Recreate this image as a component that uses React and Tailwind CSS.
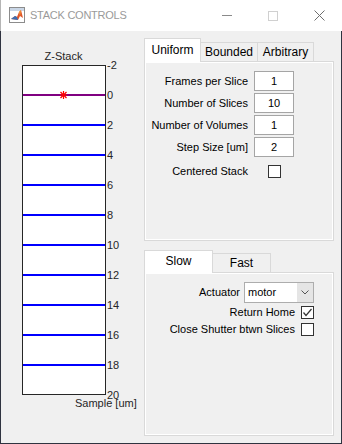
import React from "react";

function MatlabIcon() {
  return (
    <svg width="16" height="16" viewBox="0 0 16 16">
      <rect x="0.5" y="0.5" width="15" height="15" fill="#ffffff" stroke="#8c8c8c" />
      <rect x="1" y="1" width="14" height="3" fill="#c9d6e6" />
      <path d="M2 12 L6 9 L8 10 L10 5 L12 3 L14 11 L11 9 L9 13 Z" fill="#e0572a" />
      <path d="M2 12 L6 9 L8 10 L9 13 Z" fill="#3c6fb4" />
      <path d="M10 5 L12 3 L11 9 Z" fill="#f29a3a" />
    </svg>
  );
}

function CheckBox({ checked }) {
  return (
    <div className="w-[13px] h-[13px] border border-[#333333] bg-white flex items-center justify-center">
      {checked && (
        <svg width="11" height="11" viewBox="0 0 11 11">
          <polyline points="1.5,5.5 4,8.5 9.5,2" fill="none" stroke="#333333" strokeWidth="1.2" />
        </svg>
      )}
    </div>
  );
}

function EditBox({ value }) {
  return (
    <div className="w-[40px] h-[20px] border border-[#a5a5a5] bg-white flex items-center justify-center text-[11px] text-black">
      {value}
    </div>
  );
}

function ZStackPlot() {
  const ticks = [-2, 0, 2, 4, 6, 8, 10, 12, 14, 16, 18, 20];
  const yOf = (v) => 65 + (v + 2) * 15;
  return (
    <svg width="143" height="412" viewBox="0 0 143 412">
      <g transform="translate(-1,-31)" fontFamily="Liberation Sans, Arial, sans-serif" fontSize="11" fill="#262626">
        <rect x="22.5" y="65.5" width="83" height="329" fill="#ffffff" stroke="#262626" strokeWidth="1" />
        {[2, 4, 6, 8, 10, 12, 14, 16, 18].map((v) => (
          <line key={v} x1="23" x2="105" y1={yOf(v)} y2={yOf(v)} stroke="#0000ff" strokeWidth="2" />
        ))}
        <line x1="23" x2="105" y1={95} y2={95} stroke="#800080" strokeWidth="2" />
        <g stroke="#ff0000" strokeWidth="1.2">
          <line x1="63.5" y1="91" x2="63.5" y2="99" />
          <line x1="60" y1="95" x2="67" y2="95" />
          <line x1="60.5" y1="92" x2="66.5" y2="98" />
          <line x1="66.5" y1="92" x2="60.5" y2="98" />
        </g>
        <text x="63.5" y="60" textAnchor="middle">Z-Stack</text>
        {ticks.map((v) => (
          <text key={v} x="107" y={yOf(v) + 4}>{v}</text>
        ))}
        <text x="75" y="407">Sample [um]</text>
      </g>
    </svg>
  );
}

export default function App() {
  return (
    <div className="w-[342px] h-[444px] flex flex-col font-['Liberation_Sans',Arial,sans-serif] text-black overflow-hidden">
      {/* Title bar */}
      <div className="h-[31px] bg-white flex items-center border-l border-[#b5b5b5]">
        <div className="ml-[8px] mt-[-1px]">
          <MatlabIcon />
        </div>
        <div className="ml-[5px] text-[11px] tracking-[-0.25px] text-[#9a9a9a]">STACK CONTROLS</div>
        <div className="flex-1" />
        <div className="w-[46px] h-[31px] flex items-center justify-center">
          <div className="w-[10px] h-px bg-[#8a8a8a]" />
        </div>
        <div className="w-[46px] h-[31px] flex items-center justify-center">
          <div className="w-[10px] h-[10px] border border-[#d0d0d0]" />
        </div>
        <div className="w-[46px] h-[31px] flex items-center justify-center">
          <svg width="11" height="11" viewBox="0 0 11 11">
            <path d="M0.5 0.5 L10.5 10.5 M10.5 0.5 L0.5 10.5" stroke="#6e6e6e" strokeWidth="1" />
          </svg>
        </div>
      </div>

      {/* Body */}
      <div className="flex-1 flex bg-[#f0f0f0] border-l border-r border-b border-[#2f3340]">
        <div className="w-[143px] shrink-0">
          <ZStackPlot />
        </div>

        <div className="w-[190px] shrink-0 pt-[7px] flex flex-col">
          {/* Tab group 1 */}
          <div className="flex items-end h-[23px]">
            <div className="relative z-10 w-[57px] h-[24px] -mb-px bg-white border-l border-t border-r border-[#d9d9d9] flex items-center justify-center text-[12px] pb-[2px]">
              Uniform
            </div>
            <div className="w-[58px] h-[19px] -ml-px bg-[#f0f0f0] border-l border-t border-r border-[#d9d9d9] flex items-center justify-center text-[12px]">
              Bounded
            </div>
            <div className="w-[57px] h-[19px] -ml-px bg-[#f0f0f0] border-l border-t border-r border-[#d9d9d9] flex items-center justify-center text-[12px]">
              Arbitrary
            </div>
          </div>
          <div className="h-[180px] border border-[#d9d9d9] bg-[#f0f0f0]">
            <div className="h-full border border-white pt-[8px] pr-[38px] grid grid-cols-[1fr_40px] gap-x-[6px] gap-y-[2px] content-start text-[11px]">
              <div className="h-[20px] flex items-center justify-end">Frames per Slice</div>
              <EditBox value="1" />
              <div className="h-[20px] flex items-center justify-end">Number of Slices</div>
              <EditBox value="10" />
              <div className="h-[20px] flex items-center justify-end">Number of Volumes</div>
              <EditBox value="1" />
              <div className="h-[20px] flex items-center justify-end">Step Size [um]</div>
              <EditBox value="2" />
              <div className="h-[20px] flex items-center justify-end mt-[2px]">Centered Stack</div>
              <div className="h-[20px] flex items-center justify-center mt-[2px]">
                <CheckBox checked={false} />
              </div>
            </div>
          </div>

          {/* Tab group 2 */}
          <div className="flex items-end h-[22px] mt-[9px]">
            <div className="relative z-10 w-[69px] h-[23px] -mb-px bg-white border-l border-t border-r border-[#d9d9d9] flex items-center justify-center text-[12px] pb-[2px]">
              Slow
            </div>
            <div className="w-[59px] h-[19px] -ml-px bg-[#f0f0f0] border-l border-t border-r border-[#d9d9d9] flex items-center justify-center text-[12px]">
              Fast
            </div>
          </div>
          <div className="h-[164px] border border-[#d9d9d9] bg-[#f0f0f0]">
            <div className="h-full border border-white pt-[8px] pr-[18px] flex flex-col items-end text-[11px]">
              <div className="flex items-center gap-[4px]">
                <span>Actuator</span>
                <div className="w-[70px] h-[21px] border border-[#adadad] bg-white flex items-stretch">
                  <div className="flex-1 flex items-center pl-[3px]">motor</div>
                  <div className="w-[16px] bg-[#e5e5e5] flex items-center justify-center">
                    <svg width="8" height="5" viewBox="0 0 8 5">
                      <polyline points="0.5,0.5 4,4 7.5,0.5" fill="none" stroke="#555555" strokeWidth="1" />
                    </svg>
                  </div>
                </div>
              </div>
              <div className="h-[17px] mt-[1px] flex items-center gap-[6px]">
                <span>Return Home</span>
                <CheckBox checked={true} />
              </div>
              <div className="h-[17px] flex items-center gap-[6px]">
                <span>Close Shutter btwn Slices</span>
                <CheckBox checked={false} />
              </div>
            </div>
          </div>
        </div>
      </div>
    </div>
  );
}
